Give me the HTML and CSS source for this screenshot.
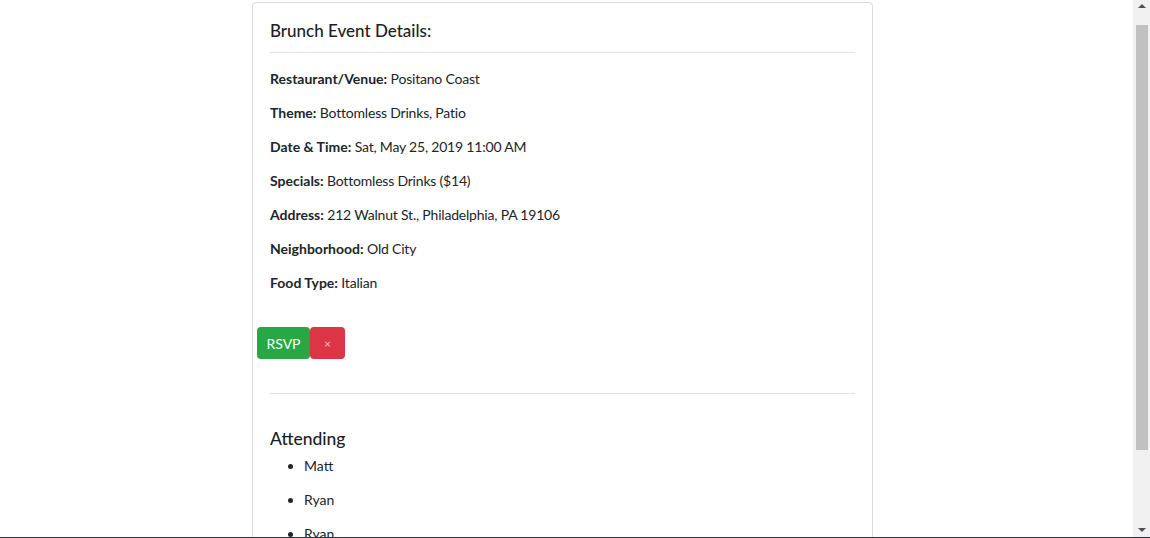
FILE: index.html
```html
<!DOCTYPE html>
<html lang="en">
<head>
<meta charset="utf-8">
<title>Brunch Event Details</title>
<link rel="stylesheet" href="styles.css">
</head>
<body>
<div class="page">
  <div class="card">
    <div class="card-body details">
      <h4 class="title">Brunch Event Details:</h4>
      <hr class="rule rule-top">
      <p class="row"><b>Restaurant/Venue:</b> Positano Coast</p>
      <p class="row"><b>Theme:</b> Bottomless Drinks, Patio</p>
      <p class="row"><b>Date &amp; Time:</b> Sat, May 25, 2019 11:00 AM</p>
      <p class="row"><b>Specials:</b> Bottomless Drinks ($14)</p>
      <p class="row"><b>Address:</b> 212 Walnut St., Philadelphia, PA 19106</p>
      <p class="row"><b>Neighborhood:</b> Old City</p>
      <p class="row"><b>Food Type:</b> Italian</p>
    </div>
    <div class="actions">
      <button class="btn btn-rsvp" type="button">RSVP</button>
      <button class="btn btn-cancel" type="button">&#215;</button>
    </div>
    <div class="card-body attending">
      <hr class="rule rule-mid">
      <h4 class="title sub">Attending</h4>
      <ul class="people">
        <li>Matt</li>
        <li>Ryan</li>
        <li>Ryan</li>
      </ul>
    </div>
  </div>
</div>
<div class="scrollbar">
  <span class="arrow arrow-up"></span>
  <span class="thumb"></span>
  <span class="arrow arrow-down"></span>
</div>
<div class="bottom-line"></div>
</body>
</html>
```
FILE: styles.css
```css
html, body {
  margin: 0;
  padding: 0;
  background: #ffffff;
}
body {
  font-family: "Lato", "Open Sans", sans-serif;
  font-size: 14px;
  color: #212529;
}
.page {
  padding: 2px 0 60px 252px;
}
.card {
  width: 619px;
  border: 1px solid #dcdcdc;
  border-radius: 4px;
  background: #fff;
}
.card-body {
  padding: 0 17px;
}
.details {
  padding-top: 17px;
}
.title {
  margin: 0;
  font-size: 17px;
  line-height: 22px;
  font-weight: 500;
  color: #1d2124;
}
.rule {
  border: 0;
  border-top: 1px solid #e3e3e3;
  margin: 0;
}
.rule-top {
  margin-top: 10px;
  margin-bottom: 14px;
}
.row {
  margin: 0 0 10px;
  line-height: 24px;
  letter-spacing: -0.2px;
}
.row b {
  font-weight: 700;
  letter-spacing: 0;
}
.actions {
  display: flex;
  margin: 32px 0 0 4px;
}
.btn {
  height: 32px;
  border: 0;
  border-radius: 4px;
  color: #fff;
  font-family: inherit;
  font-size: 14px;
  padding: 0;
  cursor: pointer;
}
.btn-rsvp {
  width: 53px;
  background: #28a745;
}
.btn-cancel {
  width: 35px;
  background: #dc3545;
  font-size: 12px;
  color: #f3c4c8;
}
.attending {
  padding-top: 34px;
  padding-bottom: 17px;
}
.rule-mid {
  margin-bottom: 34px;
}
.sub {
  font-size: 17.5px;
}
.people {
  margin: 4px 0 0;
  padding-left: 34px;
}
.people li {
  line-height: 24px;
  margin-bottom: 10px;
}
.scrollbar {
  position: fixed;
  top: 0;
  right: 0;
  width: 17px;
  height: 100%;
  background: #f1f1f1;
}
.thumb {
  position: absolute;
  left: 3px;
  width: 12px;
  top: 25px;
  height: 425px;
  background: #c1c1c1;
}
.arrow {
  position: absolute;
  left: 5px;
  width: 0;
  height: 0;
  border-left: 4px solid transparent;
  border-right: 4px solid transparent;
}
.arrow-up {
  top: 4px;
  border-bottom: 4px solid #505050;
}
.arrow-down {
  bottom: 6px;
  border-top: 4px solid #505050;
}
.bottom-line {
  position: fixed;
  left: 0;
  right: 0;
  bottom: 0;
  height: 1px;
  background: #1f3a4a;
}
```
